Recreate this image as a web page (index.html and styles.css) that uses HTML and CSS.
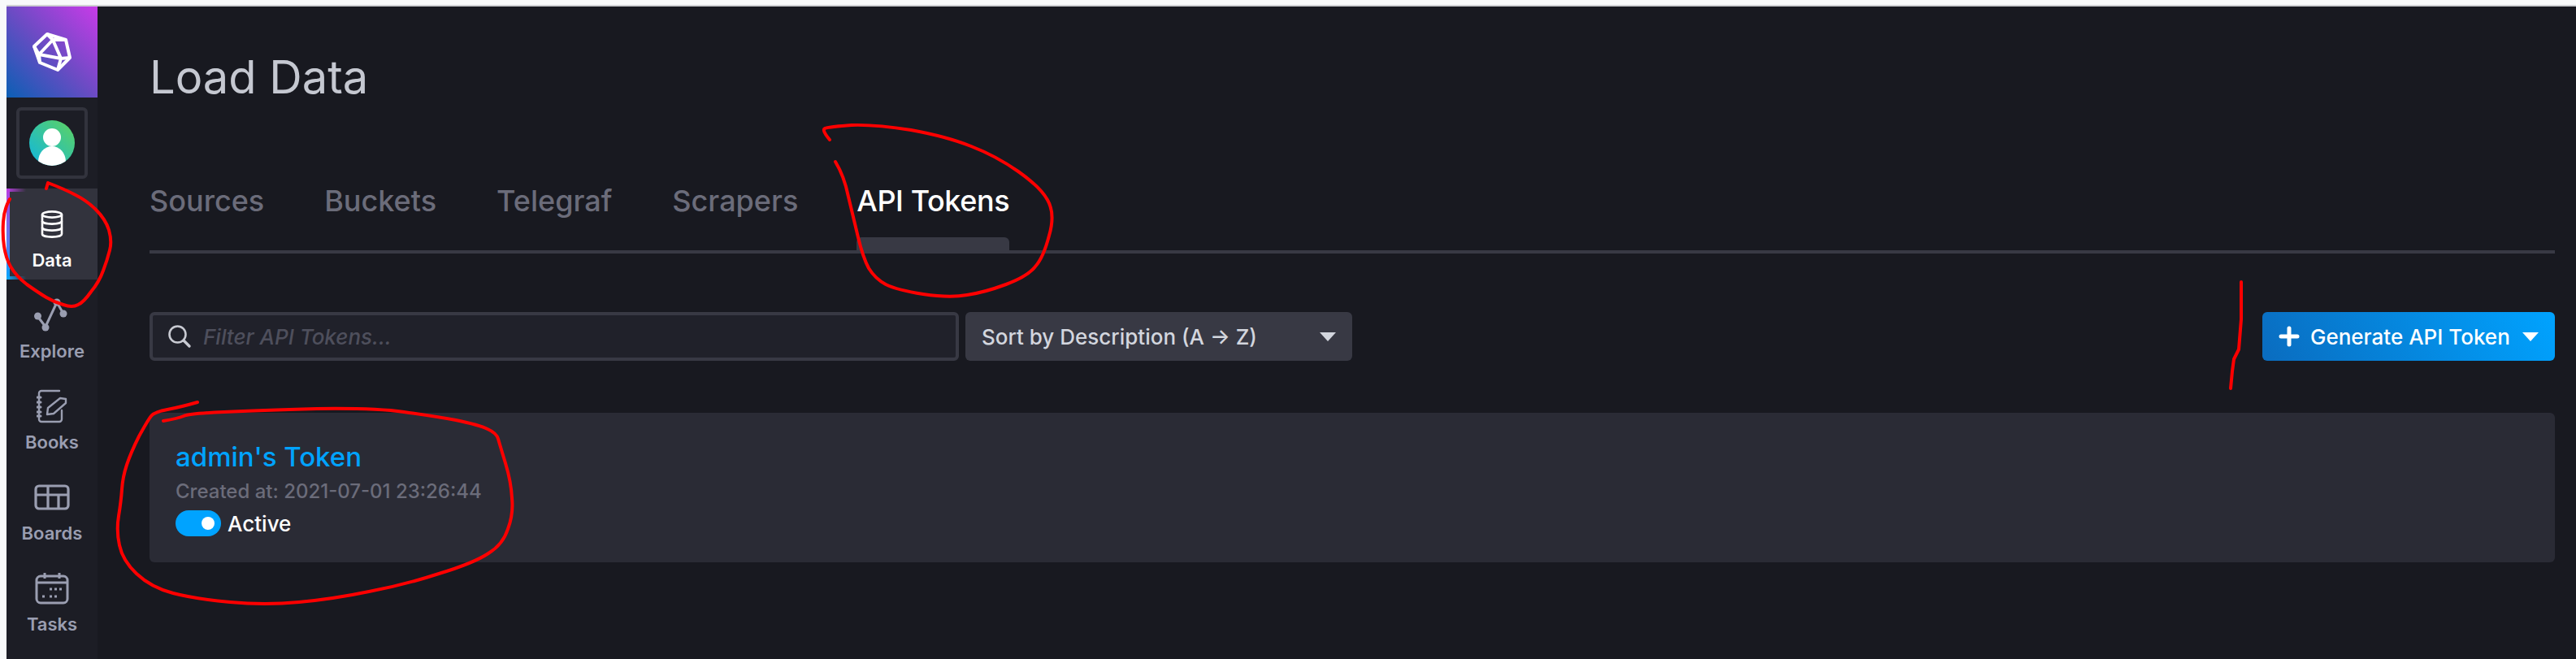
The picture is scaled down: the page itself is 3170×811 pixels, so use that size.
FILE: index.html
```html
<!DOCTYPE html>
<html lang="en">
  <head>
    <meta charset="UTF-8" />
    <title>Load Data</title>
    <link rel="stylesheet" href="styles.css">
  </head>
  <body>
    <div class="app">
      <nav class="sidebar">
        <div class="logo">
          <svg width="50" height="50" viewBox="0 0 50 50" fill="none" stroke="#fff" stroke-width="4" stroke-linejoin="round">
            <path d="M19 3 3 18 10 38 32 47 47 32 42 10Z" />
            <path d="M19 3 26 10 42 10M26 10 9 28 3 18M9 28 10 38M9 28 36 33 32 47M26 10 36 33 47 32" />
          </svg>
        </div>
        <div class="avatar-box">
          <svg width="56" height="56" viewBox="0 0 56 56">
            <defs>
              <linearGradient id="avatarFill" x1="0" y1="1" x2="1" y2="0">
                <stop offset="0" stop-color="#0fb6e0" />
                <stop offset="1" stop-color="#5fd35f" />
              </linearGradient>
              <clipPath id="avatarClip"><circle cx="28" cy="28" r="28" /></clipPath>
            </defs>
            <circle cx="28" cy="28" r="28" fill="url(#avatarFill)" />
            <g clip-path="url(#avatarClip)" fill="#fff">
              <circle cx="28" cy="21" r="11" />
              <ellipse cx="28" cy="51" rx="17" ry="19" />
            </g>
          </svg>
        </div>

        <a class="nav-item active">
          <span class="nav-icon">
            <svg width="28" height="34" viewBox="0 0 28 34" fill="none" stroke="currentColor" stroke-width="2.6">
              <ellipse cx="14" cy="5" rx="12" ry="3.6" />
              <path d="M2 5v24c0 2 5 3.6 12 3.6S26 31 26 29V5" />
              <path d="M2 13c0 2 5 3.6 12 3.6S26 15 26 13M2 21c0 2 5 3.6 12 3.6S26 23 26 21" />
            </svg>
          </span>
          <span class="nav-label">Data</span>
        </a>
        <a class="nav-item">
          <span class="nav-icon">
            <svg width="44" height="42" viewBox="0 0 44 42" fill="none" stroke="currentColor" stroke-width="3">
              <path d="M14 35 28 5 36 19M4 22 14 35" />
              <g fill="currentColor" stroke="none">
                <circle cx="4.500" cy="22" r="4.500" />
                <circle cx="14" cy="36" r="4.500" />
                <circle cx="28" cy="5" r="4.500" />
                <circle cx="36" cy="19" r="4.500" />
              </g>
            </svg>
          </span>
          <span class="nav-label">Explore</span>
        </a>
        <a class="nav-item">
          <span class="nav-icon">
            <svg width="38" height="42" viewBox="0 0 38 42" fill="none" stroke="currentColor" stroke-width="2.4" stroke-linecap="round" stroke-linejoin="round">
              <path d="M28 2H6a3 3 0 0 0-3 3v32a3 3 0 0 0 3 3h22a3 3 0 0 0 3-3V26" />
              <path d="M1 10h4M1 16h4M1 22h4M1 28h4M1 33h4" stroke-width="3" />
              <path d="M13 31 14 23 29 11 36 12 36 17 21 30Z" />
            </svg>
          </span>
          <span class="nav-label">Books</span>
        </a>
        <a class="nav-item">
          <span class="nav-icon">
            <svg width="44" height="32" viewBox="0 0 44 32" fill="none" stroke="currentColor" stroke-width="3.2" stroke-linejoin="round">
              <rect x="2" y="2" width="40" height="28" rx="4" />
              <path d="M2 13h40M17 2v28M30 13v17" />
            </svg>
          </span>
          <span class="nav-label">Boards</span>
        </a>
        <a class="nav-item">
          <span class="nav-icon">
            <svg width="42" height="40" viewBox="0 0 42 40" fill="none" stroke="currentColor" stroke-width="3">
              <rect x="2" y="5" width="38" height="33" rx="5" />
              <path d="M2 13h38M12 1v7M30 1v7" />
              <path d="M18 21h3M24 21h3M30 21h3M9 30h3M18 30h3M24 30h3" />
            </svg>
          </span>
          <span class="nav-label">Tasks</span>
        </a>
      </nav>

      <main class="content">
        <h1 class="page-title">Load Data</h1>

        <div class="tabs">
          <a class="tab">Sources</a>
          <a class="tab">Buckets</a>
          <a class="tab">Telegraf</a>
          <a class="tab">Scrapers</a>
          <a class="tab active">API Tokens</a>
        </div>

        <div class="toolbar">
          <div class="filter">
            <svg width="30" height="30" viewBox="0 0 30 30" fill="none" stroke="#c8cad2" stroke-width="2.6" stroke-linecap="round">
              <circle cx="12.500" cy="12.500" r="10" />
              <path d="M20 20 27 27" stroke-width="3.4" />
            </svg>
            <span class="filter-text">Filter API Tokens...</span>
          </div>
          <div class="sort">
            <span>Sort by Description (A → Z)</span>
            <span class="caret"></span>
          </div>
          <div class="generate">
            <svg width="26" height="26" viewBox="0 0 26 26" stroke="#fff" stroke-width="5" stroke-linecap="round">
              <path d="M13 3v20M3 13h20" />
            </svg>
            <span>Generate API Token</span>
            <span class="caret"></span>
          </div>
        </div>

        <div class="token-card">
          <div class="token-name">admin's Token</div>
          <div class="token-date">Created at: 2021-07-01 23:26:44</div>
          <div class="token-status">
            <span class="toggle"></span>
            <span>Active</span>
          </div>
        </div>
      </main>
    </div>

    <!-- red pen marks drawn over the screenshot -->
    <svg class="pen-marks" width="3170" height="811" viewBox="0 0 3170 811" fill="none" stroke="#f00" stroke-width="4" stroke-linecap="round" stroke-linejoin="round">
      <path d="M57 232 59 225Q80 233 93 240 107 247 118 258 130 270 134 283 138 297 135 308 132 320 127 333 122 347 112 359 103 372 96 375 89 379 78 375 67 372 57 366 47 360 33 350 20 340 13 328 7 317 5 303 3 290 4 273 5 257 12 245" />
      <path d="M1021 172Q1011 160 1015 158 1020 156 1048 154 1077 153 1121 160 1165 168 1195 180 1226 192 1253 211 1280 230 1289 246 1299 263 1291 290 1284 317 1274 328 1265 340 1238 350 1211 360 1190 363 1169 367 1136 362 1104 357 1090 350 1077 343 1069 330 1062 317 1056 292 1050 267 1044 242 1039 217 1028 199" />
      <path d="M243 495Q222 501 206 504 190 507 186 512 182 517 171 537 161 557 156 572 151 587 150 602 149 617 146 635 143 653 147 671 151 690 168 706 186 723 213 730 240 737 283 741 326 745 368 741 411 737 454 728 497 720 540 706 583 693 601 681 619 670 625 651 632 633 630 613 629 593 622 570 615 547 613 540 611 533 600 528 590 523 561 517 533 512 497 507 461 502 390 503 319 505 276 507 233 509 226 512 219 515 201 518" />
      <path d="M2758 347 2758 393 2755 430 2749 442 2747 457 2745 478" />
    </svg>
  </body>
</html>
```

FILE: styles.css
```css
* {
  box-sizing: border-box;
  font-family: Inter, "Noto Sans", sans-serif;
}

html,
body {
  height: 100%;
}

body {
  margin: 0;
  padding: 6px 0 0 8px;
  background-color: #f8f9fa;
  overflow: hidden;
}

.app {
  display: flex;
  height: 805px;
  border-top: 2px solid #cfd0d3;
  background-color: #181920;
}

/* sidebar */
.sidebar {
  width: 112px;
  flex-shrink: 0;
  background-color: #1c1d25;
}

.logo {
  height: 112px;
  display: flex;
  align-items: center;
  justify-content: center;
  background: linear-gradient(45deg, #0b5fb4, #6c4bc4 50%, #c83be8);
}

.avatar-box {
  width: 88px;
  height: 88px;
  margin: 12px 12px;
  border: 4px solid #32333d;
  border-radius: 6px;
  display: flex;
  align-items: center;
  justify-content: center;
}

.nav-item {
  display: flex;
  flex-direction: column;
  align-items: center;
  height: 112px;
  padding-top: 20px;
  color: #9a9eb1;
}

.nav-item.active {
  color: #fff;
  background:
    linear-gradient(90deg, #b73ce0, transparent) top left / 24px 4px no-repeat,
    linear-gradient(90deg, #0ea5f5, transparent) bottom left / 24px 4px no-repeat,
    linear-gradient(180deg, #b73ce0, #5a7cf0 60%, #00a3ff) left / 4px 100% no-repeat,
    #32333d;
}

.nav-icon {
  height: 48px;
  display: flex;
  align-items: center;
  justify-content: center;
}

.nav-label {
  margin-top: 6px;
  font-size: 22px;
  line-height: 28px;
  font-weight: 600;
}

/* main area */
.content {
  flex: 1;
  padding: 0 26px 0 64px;
}

.page-title {
  margin: 52px 0 0;
  font-size: 56px;
  line-height: 70px;
  font-weight: 400;
  color: #c5c8d1;
}

.tabs {
  display: flex;
  gap: 74px;
  margin-top: 87px;
  padding-bottom: 31px;
  border-bottom: 4px solid #383944;
}

.tab {
  position: relative;
  font-size: 36px;
  line-height: 60px;
  font-weight: 500;
  color: #6b6c7a;
}

.tab.active {
  margin-left: -2px;
  letter-spacing: -0.4px;
  color: #fff;
}

.tab.active::after {
  content: "";
  position: absolute;
  left: 0;
  right: 0;
  bottom: -31px;
  height: 16px;
  background-color: #383944;
  border-radius: 6px 6px 0 0;
}

.toolbar {
  display: flex;
  margin-top: 72px;
  height: 60px;
}

.filter {
  width: 996px;
  display: flex;
  align-items: center;
  gap: 14px;
  padding-left: 18px;
  background-color: #20212a;
  border: 4px solid #383944;
  border-radius: 6px;
}

.filter-text {
  font-size: 26px;
  font-style: italic;
  font-weight: 500;
  color: #4e4f5c;
}

.sort {
  width: 476px;
  margin-left: 8px;
  padding: 0 20px;
  display: flex;
  align-items: center;
  justify-content: space-between;
  background-color: #383944;
  border-radius: 6px;
  font-size: 26px;
  font-weight: 500;
  color: #d3d6de;
}

.caret {
  width: 0;
  height: 0;
  border-left: 10px solid transparent;
  border-right: 10px solid transparent;
  border-top: 11px solid currentColor;
}

.generate {
  width: 360px;
  margin-left: auto;
  padding: 0 20px;
  display: flex;
  align-items: center;
  gap: 13px;
  background: linear-gradient(60deg, #0a6cbf, #00a3ff);
  border-radius: 6px;
  font-size: 26px;
  font-weight: 500;
  color: #fff;
}

.generate .caret {
  margin-left: auto;
}

.token-card {
  margin-top: 64px;
  height: 184px;
  padding: 36px 32px 0;
  background-color: #2a2b35;
  border-radius: 6px;
}

.token-name {
  font-size: 33px;
  line-height: 36px;
  font-weight: 500;
  color: #00a3ff;
}

.token-date {
  margin-top: 11px;
  font-size: 24px;
  line-height: 28px;
  font-weight: 500;
  color: #6b6c7a;
}

.token-status {
  margin-top: 9px;
  display: flex;
  align-items: center;
  gap: 8px;
  font-size: 26px;
  font-weight: 500;
  color: #fff;
}

.toggle {
  position: relative;
  width: 56px;
  height: 32px;
  border-radius: 16px;
  background-color: #00a3ff;
}

.toggle::after {
  content: "";
  position: absolute;
  top: 8px;
  right: 8px;
  width: 16px;
  height: 16px;
  border-radius: 50%;
  background-color: #fff;
}

.pen-marks {
  position: absolute;
  top: 0;
  left: 0;
}
```
